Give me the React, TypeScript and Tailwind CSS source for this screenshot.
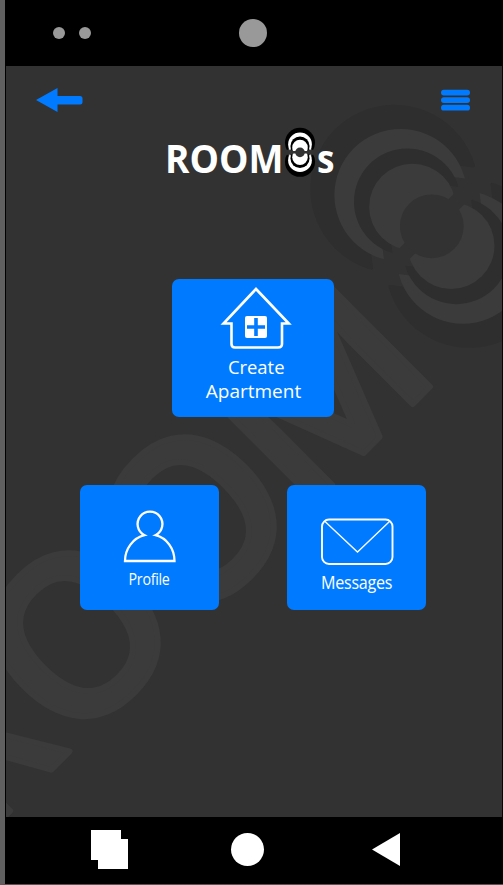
import React from "react";

const label = "inline-block font-['Open_Sans','Noto_Sans',sans-serif] text-white";

const discs = [
  { cy: -53, r: 84, tone: "dark", clip: "M-200 -200H200V-11.7H71.4L0 -104L-71.4 -11.7H-200Z" },
  { cy: -44, r: 66.3, tone: "light", clip: "M-200 -200H200V-10.3H57.3L0 -84L-57.3 -10.3H-200Z" },
  { cy: -34.7, r: 53.3, tone: "dark", clip: "M-200 -200H200V-9.3H46.5L0 -68L-46.5 -9.3H-200Z" },
  { cy: -27.4, r: 43.3, tone: "light", clip: "M-200 -200H200V-7.4H-200Z" },
];

type RingsProps = { id: string; transform: string; light: string; dark: string; mid: string; midRadius: number };

function Rings({ id, transform, light, dark, mid, midRadius }: RingsProps) {
  return (
    <g transform={transform}>
      {discs.map((d, i) => (
        <clipPath key={i} id={`${id}-${i}`}>
          <path d={d.clip} />
        </clipPath>
      ))}
      {[0, 180].map((turn) => (
        <g key={turn} transform={`rotate(${turn})`}>
          {discs.map((d, i) => (
            <circle key={i} cy={d.cy} r={d.r} fill={d.tone === "dark" ? dark : light} clipPath={`url(#${id}-${i})`} />
          ))}
        </g>
      ))}
      <circle r={midRadius} fill={mid} />
    </g>
  );
}

function Watermark() {
  return (
    <svg className="absolute inset-0" width="496" height="751" viewBox="6 66 496 751">
      <g fill="#3b3b3b" stroke="#3b3b3b" strokeWidth="6" strokeLinejoin="round" fontFamily="'Open Sans','Noto Sans',sans-serif" fontWeight="600" fontSize="223">
        <text transform="matrix(.636 -.636 .68 .68 -19.5 840.5)">R</text>
        <text transform="matrix(.7 -.7 .707 .707 71.500 752.500)">O</text>
        <text transform="matrix(.7 -.7 .707 .707 187.500 636.500)">O</text>
        <text transform="matrix(.7 -.7 .64 .64 301 516)">M</text>
      </g>
      <Rings id="wm" transform="translate(431.8 226.3) rotate(-45)" light="#3b3b3b" dark="#2e2e2e" mid="#323232" midRadius={31.9} />
    </svg>
  );
}

function Logo() {
  return (
    <svg className="ml-[157px] block" width="176" height="56" viewBox="163 124 176 56">
      <g fill="#fff" fontFamily="'Open Sans','Noto Sans',sans-serif" fontWeight="700" fontSize="38.500">
        <text x="165" y="172.700" textLength="118.500" lengthAdjust="spacingAndGlyphs">ROOM</text>
        <text x="317" y="172.700" textLength="17.500" lengthAdjust="spacingAndGlyphs">s</text>
      </g>
      <Rings id="logo" transform="translate(300 152.300) scale(.179)" light="#fff" dark="#000" mid="#323232" midRadius={27} />
    </svg>
  );
}

export default function App() {
  return (
    <div className="flex h-[885px] w-[503px] flex-col border-b border-l-[5px] border-b-[#555] border-l-[#606060] bg-black">
      <header className="flex h-[66px] items-center pl-12">
        <i className="size-[11.5px] rounded-full bg-[#999]" />
        <i className="ml-[14.5px] size-[11.5px] rounded-full bg-[#999]" />
        <i className="ml-[148.5px] size-[27.5px] rounded-full bg-[#999]" />
      </header>
      <main className="relative mr-px ml-px h-[751px] overflow-hidden bg-[#323232]">
        <Watermark />
        <div className="relative">
          <nav className="flex h-[58px] items-start justify-between pt-[22px] pr-8 pl-[30px]">
            <svg width="47" height="24" viewBox="0 0 47 24" fill="#007bff">
              <path d="M0 12 21.500 0V8H44a2.500 2.500 0 0 1 2.500 2.500v3.500a2.500 2.500 0 0 1-2.500 2.500H21.500V24Z" />
            </svg>
            <svg width="29" height="24" viewBox="0 0 29 24" fill="#007bff">
              <rect y="1.700" width="29" height="5.800" rx="2.900" />
              <rect y="9.200" width="29" height="5.800" rx="2.900" />
              <rect y="16.800" width="29" height="5.800" rx="2.900" />
            </svg>
          </nav>
          <Logo />
          <button className="mt-[99px] ml-[166px] flex h-[138px] w-[162px] flex-col items-center rounded-[7px] bg-[#007bff] pt-[7px] pl-[6px]">
            <svg width="72" height="64" viewBox="220 286 72 64" fill="none">
              <path d="M256 289 223.500 323.500H231.500V344Q231.500 347.500 235 347.500H278Q282 347.500 282 344V323.500H288.800Z" stroke="#fff" strokeWidth="2.600" />
              <rect x="245" y="316" width="22" height="22" rx="2" fill="#fff" />
              <path d="M256 318V336M247 327H265" stroke="#007bff" strokeWidth="3.600" />
            </svg>
            <span className={`${label} mt-[5px] scale-x-[.97] text-[19px] leading-6 font-medium`}>Create</span>
            <span className={`${label} mr-[5px] text-[19px] leading-6 font-medium`}>Apartment</span>
          </button>
          <div className="mt-[68px] flex gap-[68px] pl-[74px]">
            <button className="flex h-[125px] w-[139px] flex-col items-center rounded-[7px] bg-[#007bff] pt-6">
              <svg width="54" height="54" viewBox="123 509 54 54" fill="none" stroke="#fff" strokeWidth="2.300" strokeMiterlimit="3">
                <path d="M144.500 535.200A12.400 12.400 0 1 1 155.500 535.200C167 538 174.500 549 174.500 561H125C125 549 133 538 144.500 535.200Z" />
              </svg>
              <span className={`${label} scale-x-[.89] text-[16px] leading-8 font-medium tracking-[-0.3px]`}>Profile</span>
            </button>
            <button className="flex h-[125px] w-[139px] flex-col items-center rounded-[7px] bg-[#007bff] pt-8">
              <svg width="74" height="50" viewBox="320 517 74 50" fill="none" stroke="#fff">
                <rect x="322" y="519.500" width="70.500" height="44.500" rx="7" strokeWidth="1.900" />
                <path d="M325 521.500 357.500 552 389.500 521.500" strokeWidth="1.300" />
              </svg>
              <span className={`${label} -mt-px scale-x-[.92] text-[17.5px] leading-8 font-medium tracking-[-0.3px]`}>Messages</span>
            </button>
          </div>
        </div>
      </main>
      <footer className="flex h-[67px] items-start">
        <svg className="mt-[13px] ml-[86px]" width="37" height="40" fill="#fff">
          <path d="M0 0H30V9H37V39H7V30H0Z" />
        </svg>
        <i className="mt-[16px] ml-[103px] size-[33px] rounded-full bg-white" />
        <svg className="mt-[16px] ml-[108px]" width="28" height="33" fill="#fff">
          <path d="M0 16.500 28 0V33Z" />
        </svg>
      </footer>
    </div>
  );
}
